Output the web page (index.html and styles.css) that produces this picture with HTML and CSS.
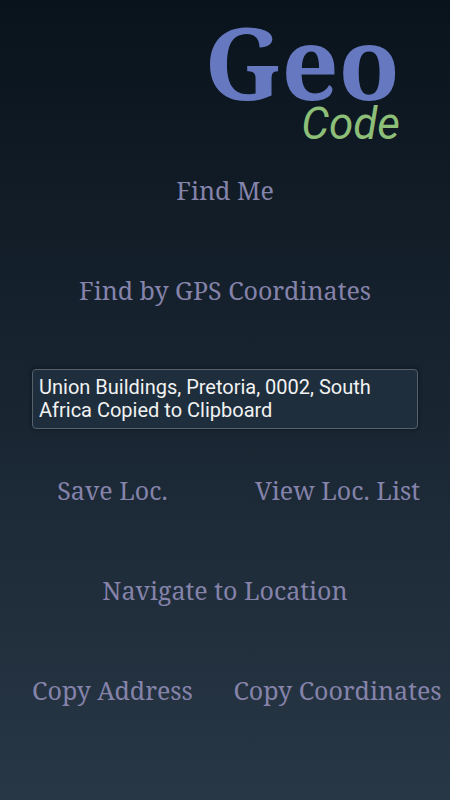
FILE: index.html
```html
<!DOCTYPE html>
<html lang="en">
<head>
<meta charset="utf-8">
<meta name="viewport" content="width=device-width, initial-scale=1">
<title>Geo Code</title>
<link rel="stylesheet" href="styles.css">
</head>
<body>
<main class="screen">
  <h1 class="logo"><span class="logo-geo">Geo</span><span class="logo-code">Code</span></h1>
  <div class="row"><button class="action" type="button">Find Me</button></div>
  <div class="row"><button class="action" type="button">Find by GPS Coordinates</button></div>
  <div class="row row-toast"><p class="toast" role="status">Union Buildings, Pretoria, 0002, South Africa Copied to Clipboard</p></div>
  <div class="row"><button class="action" type="button">Save Loc.</button><button class="action" type="button">View Loc. List</button></div>
  <div class="row"><button class="action" type="button">Navigate to Location</button></div>
  <div class="row"><button class="action" type="button">Copy Address</button><button class="action" type="button">Copy Coordinates</button></div>
</main>
</body>
</html>
```

FILE: styles.css
```css
* { box-sizing: border-box; }

body {
  margin: 0;
  min-height: 100vh;
  background: linear-gradient(#09131c, #283746) no-repeat;
}

.screen {
  display: flex;
  flex-direction: column;
}

.logo {
  display: flex;
  flex-direction: column;
  align-items: flex-end;
  margin: 0;
  padding: 12px 50px 2px 0;
  font-weight: 400;
}

.logo-geo {
  color: #6679c0;
  font: 700 100px/98px "Noto Serif", "DejaVu Serif", serif;
}

.logo-code {
  color: #8dbf78;
  font: italic 400 44px/28px Roboto, sans-serif;
}

.row {
  display: flex;
  min-height: 100px;
}

.action {
  flex: 1 1 0;
  min-width: 0;
  padding: 0;
  border: 0;
  background: none;
  color: #8583aa;
  font: 400 25px/32px "Noto Serif", "DejaVu Serif", serif;
  white-space: nowrap;
}

.row-toast {
  align-items: flex-end;
  padding: 0 32px 11px;
}

.toast {
  flex: 1;
  margin: 0;
  padding: 6px;
  border: 1px solid #56616b;
  border-radius: 4px;
  background: #1e2e3c;
  box-shadow: 0 0 4px #0b141d;
  color: #f2f2f2;
  font: 400 20px/23px Roboto, sans-serif;
}
```
